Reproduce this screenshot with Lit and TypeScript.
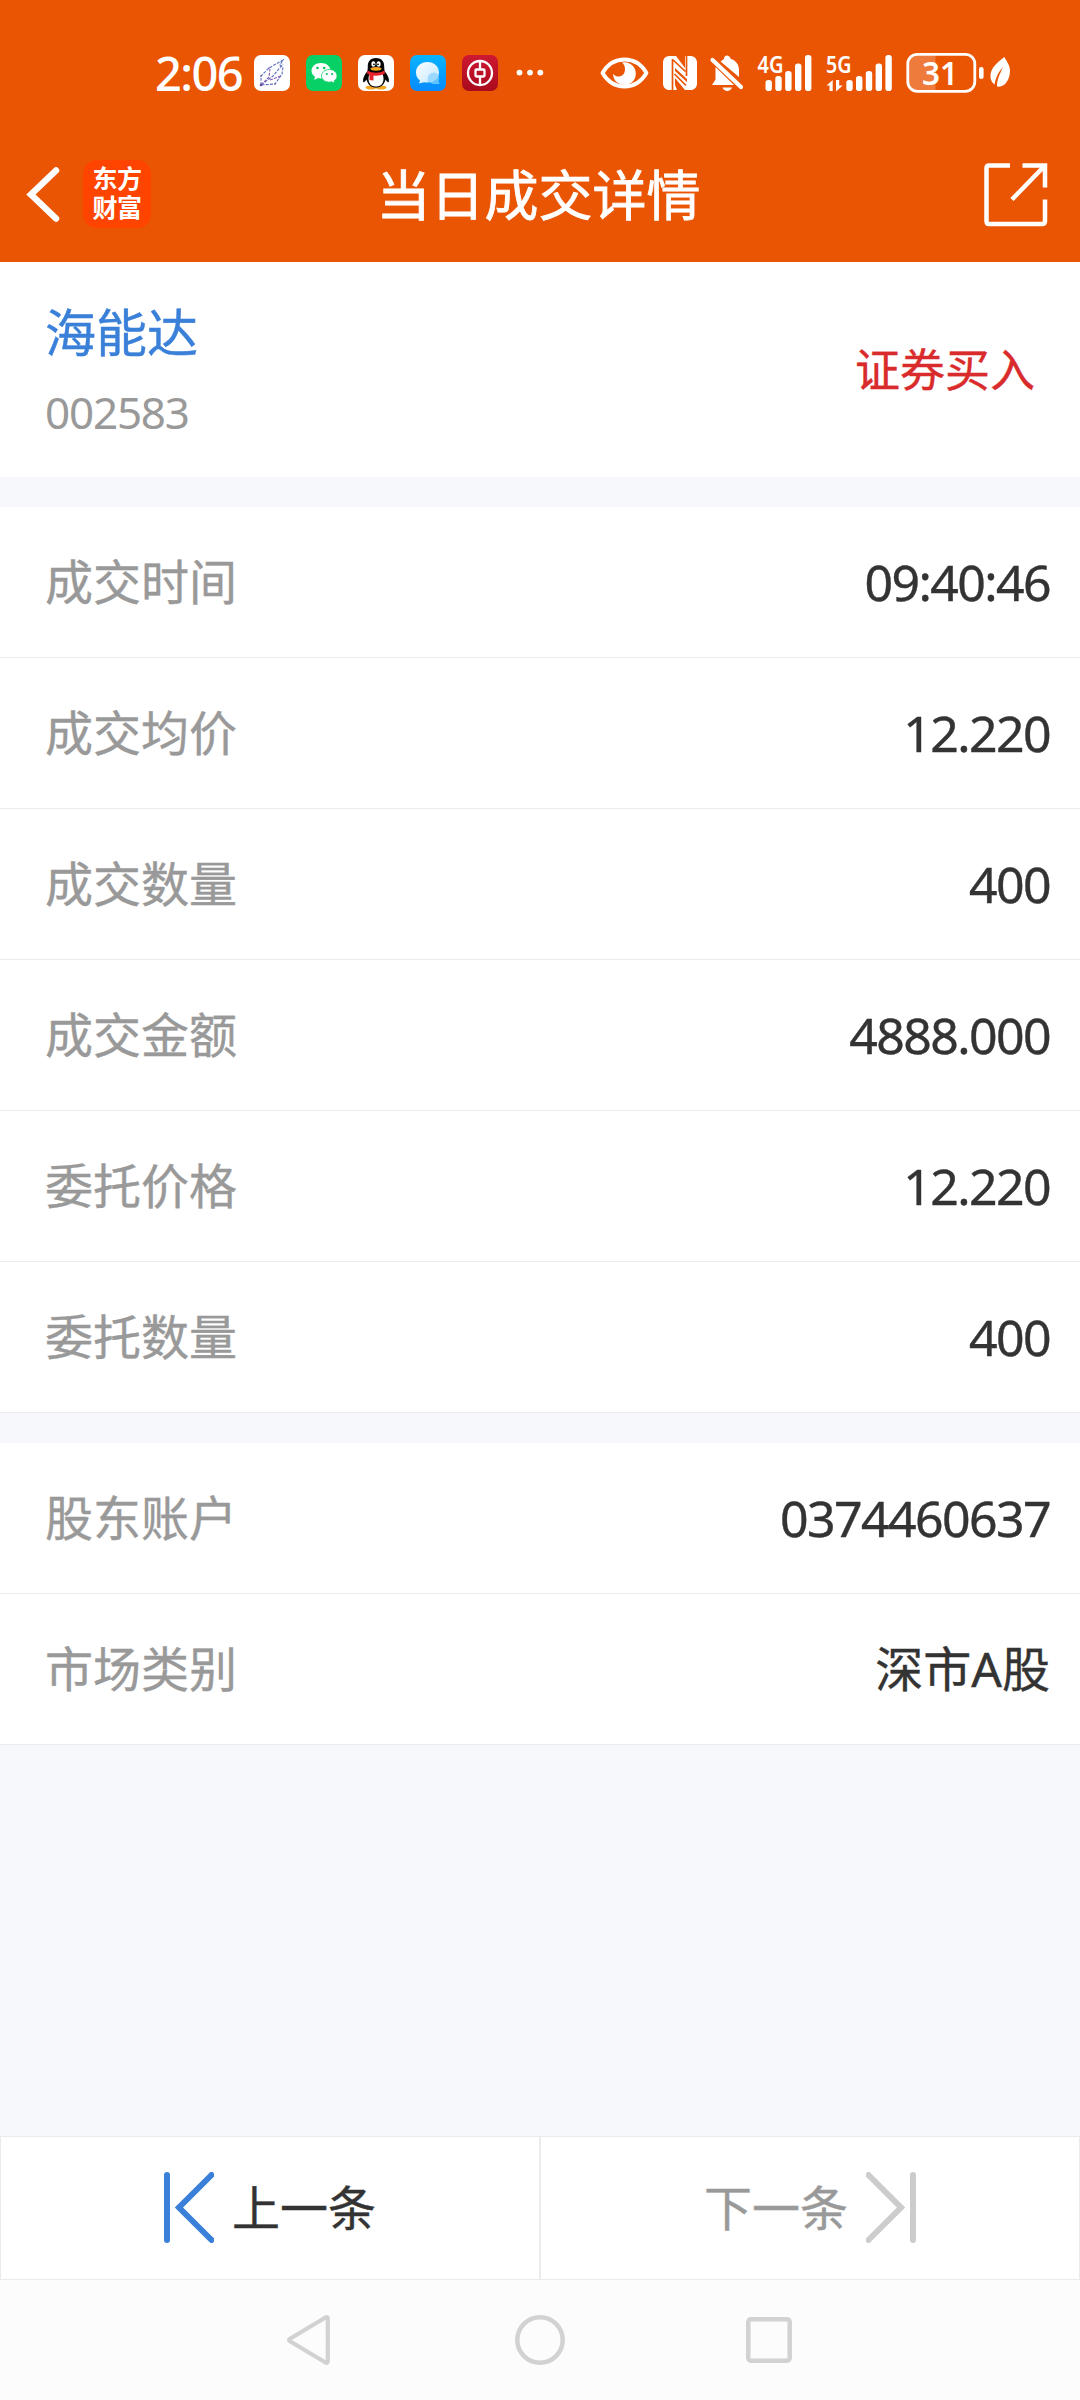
import { LitElement, html, css, svg } from "lit";
import { customElement, property } from "lit/decorators.js";

interface Entry {
  label: string;
  value: string;
}

const TRADE: Entry[] = [
  { label: "成交时间", value: "09:40:46" },
  { label: "成交均价", value: "12.220" },
  { label: "成交数量", value: "400" },
  { label: "成交金额", value: "4888.000" },
  { label: "委托价格", value: "12.220" },
  { label: "委托数量", value: "400" },
];

const ACCOUNT: Entry[] = [
  { label: "股东账户", value: "0374460637" },
  { label: "市场类别", value: "深市A股" },
];

// Signal bars: [x, top]; every bar ends on the same baseline.
const bars = (items: number[][]) =>
  items.map(([x, y]) => svg`<rect x=${x} y=${y} width="6.4" height=${37 - y} rx="2.8" fill="#fff"/>`);

@customElement("status-bar")
class StatusBar extends LitElement {
  static styles = css`
    :host {
      display: flex;
      align-items: center;
      height: 96px;
      padding: 50px 0 0 155px;
      box-sizing: border-box;
      color: #fff;
      font-family: "Noto Sans", "Noto Sans CJK SC", sans-serif;
    }
    svg {
      display: block;
      flex: none;
      overflow: visible;
    }
    .time {
      width: 99px;
      flex: none;
      font-size: 47px;
      line-height: 46px;
      font-weight: 500;
      letter-spacing: -1.6px;
      white-space: nowrap;
    }
    .apps {
      display: flex;
      gap: 16px;
      width: 346px;
      flex: none;
    }
    .net {
      font: 600 23px "Noto Sans", sans-serif;
    }
    .level {
      font: 600 33px "Noto Sans", sans-serif;
    }
    .system {
      display: flex;
      align-items: center;
    }
    .nfc { margin-left: 14px; }
    .bell { margin-left: 13px; }
    .signal { margin-left: 13px; }
    .signal5 { margin-left: 13px; }
    .battery { margin-left: 13px; }
    .leaf { margin-left: 6px; }
  `;

  render() {
    return html`
      <div class="time">2:06</div>
      <div class="apps">
        <svg width="36" height="36" viewBox="0 0 36 36">
          <rect width="36" height="36" rx="7" fill="#fff" />
          <g fill="none" stroke-width="1.1" stroke-dasharray="3 1.2">
            <path d="M7 30V21L15 13L29 5L26 10L29 12L28 19L21 29L7 30L19 21L29 9" stroke="#5b6fc0" />
            <path d="M7 30L15 22L16 14M16 25L27 21" stroke="#8a58b8" />
          </g>
          <g fill="#6b4aa5"><circle cx="7" cy="30" r="1.3" /><circle cx="7" cy="21" r=".8" /><circle cx="15" cy="13" r=".8" /><circle cx="21" cy="29" r=".8" /></g>
        </svg>
        <svg width="36" height="36" viewBox="0 0 36 36">
          <rect width="36" height="36" rx="7" fill="#07d166" />
          <path d="M15 8C9.500 8 5.500 11.500 5.500 15.700C5.500 18.200 6.900 20.300 9 21.700L8.200 25L12 23C18 24.600 24.500 21 24.500 15.700C24.500 11.500 20.400 8 15 8Z" fill="#fff" />
          <path d="M23.500 14.500C18.800 14.500 15.500 17.400 15.500 20.900C15.500 25.400 20.800 28.100 25.700 26.800L28.900 28.200L28.200 25.700C30.200 24.500 31 22.800 31 20.900C31 17.400 27.800 14.500 23.500 14.500Z" fill="#fff" stroke="#07d166" stroke-width=".8" />
          <g fill="#07c160"><circle cx="11.500" cy="13" r="1.300" /><circle cx="18.200" cy="13" r="1.300" /><circle cx="20.800" cy="19" r="1.100" /><circle cx="26.200" cy="19" r="1.100" /></g>
        </svg>
        <svg width="36" height="36" viewBox="0 0 36 36">
          <rect width="36" height="36" rx="7" fill="#fff" />
          <ellipse cx="13" cy="32.500" rx="5.500" ry="2" fill="#f5a623" />
          <ellipse cx="23" cy="32.500" rx="5.500" ry="2" fill="#f5a623" />
          <path d="M18 3C12 3 9.500 7 9.800 12L9.500 16C6 20 4.500 24 5.200 27C6 28 7.500 26 8.500 24.500C10 30 13 32.500 18 32.500S26 30 27.500 24.500C28.500 26 30 28 30.800 27C31.500 24 30 20 26.500 16L26.200 12C26.500 7 24 3 18 3Z" fill="#050505" />
          <path d="M11.500 19C9 25 11 31.500 18 31.500S27 25 24.500 19Z" fill="#fff" />
          <ellipse cx="15.400" cy="9" rx="2" ry="2.800" fill="#fff" /><ellipse cx="20.600" cy="9" rx="2" ry="2.800" fill="#fff" />
          <circle cx="16" cy="9.300" r=".9" /><circle cx="20" cy="9.300" r=".9" />
          <ellipse cx="18" cy="13.800" rx="5.500" ry="1.900" fill="#f7a51c" />
          <path d="M9.500 15.500C15 18.500 21 18.500 26.500 15.500L27 18.500C23 20.500 19 21 15.500 20.500V25.500L11.500 25V19.700L9 18.500Z" fill="#e8222b" />
        </svg>
        <svg width="36" height="36" viewBox="0 0 36 36">
          <defs>
            <linearGradient id="sky" x2="0" y2="1"><stop stop-color="#08b4ff" /><stop offset="1" stop-color="#078bff" /></linearGradient>
            <linearGradient id="bubble" x2="1" y2="1"><stop stop-color="#fff" /><stop offset="1" stop-color="#bfe6ff" /></linearGradient>
          </defs>
          <rect width="36" height="36" rx="7" fill="url(#sky)" />
          <path d="M23 17.500A6 6 0 0 1 28.500 26L29.500 29H23A6 6 0 0 1 23 17.500Z" fill="#62c4ff" />
          <path d="M17.500 7C11 7 6 11.500 6 17.500C6 21 7.600 23.700 10 25.500L9 28.500L14 27.200C22 28.600 29 24 29 17.500C29 11.500 24 7 17.500 7Z" fill="url(#bubble)" />
          <path d="M17.800 24A6 6 0 0 1 28.600 20C27.300 24.500 22.500 27.200 18 27.300Z" fill="#9bd8ff" />
        </svg>
        <svg width="36" height="36" viewBox="0 0 36 36">
          <defs><linearGradient id="bank" x2="0" y2="1"><stop stop-color="#ce1832" /><stop offset="1" stop-color="#a90b1d" /></linearGradient></defs>
          <rect width="36" height="36" rx="7" fill="url(#bank)" />
          <circle cx="18" cy="18" r="12" fill="none" stroke="#fff" stroke-width="2.300" />
          <rect x="13.500" y="14.500" width="9" height="7" rx="1" fill="none" stroke="#fff" stroke-width="2.300" />
          <path d="M18 6V14M18 22V30" stroke="#fff" stroke-width="2.300" />
        </svg>
        <svg width="30" height="36" viewBox="0 0 30 36" fill="#fff">
          <circle cx="5.500" cy="17.600" r="2.900" /><circle cx="16" cy="17.600" r="2.900" /><circle cx="26.300" cy="17.600" r="2.900" />
        </svg>
      </div>
      <div class="system">
        <svg width="49" height="38" viewBox="0 0 49 38">
          <path d="M2.500 19C13 1 36 1 46.500 19C36 37 13 37 2.500 19Z" fill="none" stroke="#fff" stroke-width="3.800" stroke-linejoin="round" />
          <path d="M22 8.500A11.400 11.400 0 1 1 13 20C16.500 23.500 21.500 23.500 24 19.500C26 15.500 25 11 22 8.500Z" fill="#fff" />
        </svg>
        <svg class="nfc" width="34" height="38" viewBox="0 0 34 38">
          <path d="M7 2H11V36H7C3 36 0.500 34 0 30V8C0.500 4 3 2 7 2Z" fill="#fff" />
          <path d="M23 2H27C31 2 33.500 4 34 8V30C33.500 34 31 36 27 36H24V2Z" fill="#fff" />
          <path d="M9 2H13L22 14V2H25V26L12 14V31L14 36H9Z" fill="#fff" />
          <path d="M12 17L25 29V36H22L12 24Z" fill="#fff" />
          <path d="M9.500 5V36M9.500 5.500L22.500 17.500M11.500 20L23 31.500M23.500 2V22" fill="none" stroke="#ea5504" stroke-width="1.700" />
        </svg>
        <svg class="bell" width="34" height="38" viewBox="0 0 34 38">
          <path d="M5.500 13L24 31H2L5.500 25.500ZM10.500 7.500L14 5C14 2.600 15.500 1.500 17 1.500S20.500 3 20.500 4.700C26 6.500 29 10.500 29 16V23Z" fill="#fff" />
          <path d="M2.500 6L31 33" stroke="#fff" stroke-width="4.200" stroke-linecap="round" />
          <path d="M12.500 33.500H22C20.500 38 14 38 12.500 33.500Z" fill="#fff" />
        </svg>
        <svg class="signal" width="56" height="38" viewBox="0 0 56 38">
          <text class="net" x="0.500" y="18.500" textLength="26" lengthAdjust="spacingAndGlyphs" fill="#fff">4G</text>
          ${bars([[8.5, 26], [18.3, 22], [28.2, 17], [38, 9.5], [48, 1]])}
        </svg>
        <svg class="signal5" width="67" height="38" viewBox="0 0 67 38">
          <text class="net" x="0" y="18.500" textLength="25.500" lengthAdjust="spacingAndGlyphs" fill="#fff">5G</text>
          <path d="M0.500 31.500L6.700 26V37H3.500V31.500ZM16.700 31.500L10 37.500V26H13.200V31.500Z" fill="#fff" />
          ${bars([[20.3, 26], [30, 22], [39.8, 17], [49.6, 9.5], [59.4, 1]])}
        </svg>
        <svg class="battery" width="78" height="42" viewBox="0 0 78 42">
          <path d="M12 2H29.500V40H12C5 40 2 36 2 31V11C2 5 6 2 12 2Z" fill="#fff" fill-opacity=".22" />
          <rect x="1.800" y="2.300" width="67" height="37" rx="9.500" fill="none" stroke="#fff" stroke-width="2.800" />
          <rect x="73" y="15" width="4.600" height="12" rx="2.200" fill="#fff" />
          <text class="level" x="16" y="32.500" textLength="36" lengthAdjust="spacingAndGlyphs" fill="#fff">31</text>
        </svg>
        <svg class="leaf" width="21" height="38" viewBox="0 0 21 38">
          <path d="M14.500 3C5 10 0 15.500 0.500 23C0.700 26 2 28.500 4.500 30.500C6 23 8.500 18 13 13C10 20 7 25 7 32.500C15 34 20 25 20 17C20 11 16.500 7.500 14.500 3Z" fill="#fff" />
        </svg>
      </div>
    `;
  }
}

@customElement("title-bar")
class TitleBar extends LitElement {
  static styles = css`
    :host {
      display: grid;
      grid-template-columns: 1fr auto 1fr;
      align-items: center;
      height: 136px;
      margin-top: 30px;
      padding: 0 32px 0 25px;
      box-sizing: border-box;
      color: #fff;
    }
    svg {
      display: block;
    }
    .left {
      display: flex;
      align-items: center;
      gap: 23px;
    }
    .logo {
      display: grid;
      align-content: center;
      width: 68px;
      height: 68px;
      border-radius: 14px;
      background: #ff4400;
      text-align: center;
      font-size: 25px;
      font-weight: 700;
      line-height: 29px;
      padding-bottom: 4px;
      box-sizing: border-box;
      letter-spacing: -0.4px;
    }
    .title {
      font-size: 54px;
      line-height: 80px;
      padding: 0 0 3px 4px;
      white-space: nowrap;
      -webkit-text-stroke: 0.8px currentColor;
    }
    .share {
      justify-self: end;
      margin-top: 1px;
    }
  `;

  render() {
    return html`
      <div class="left">
        <svg width="35" height="56" viewBox="0 0 35 56">
          <path d="M31 4.500L6 28.500L31 52.500" fill="none" stroke="#fff" stroke-width="6.500" stroke-linecap="round" stroke-linejoin="miter" />
        </svg>
        <div class="logo"><span>东方</span><span>财富</span></div>
      </div>
      <div class="title">当日成交详情</div>
      <svg class="share" width="64" height="64" viewBox="0 0 64 64" fill="none" stroke="#fff" stroke-width="4.500">
        <path d="M26 2.500H5Q2.500 2.500 2.500 5V58Q2.500 61 5 61H58Q61 61 61 58V36.500" />
        <path d="M38.500 2.500H61V24.500M61 2.500L28 36.500" />
      </svg>
    `;
  }
}

@customElement("detail-list")
class DetailList extends LitElement {
  @property({ attribute: false }) entries: Entry[] = [];

  static styles = css`
    :host {
      display: block;
      background: #fff;
    }
    .row {
      display: flex;
      align-items: center;
      justify-content: space-between;
      height: 151px;
      padding: 0 30px 0 45px;
      box-sizing: border-box;
      border-bottom: 1px solid #ebebed;
    }
    .label {
      color: #999;
      font-size: 48px;
      line-height: 72px;
      padding-bottom: 6px;
      -webkit-text-stroke: 0.4px currentColor;
    }
    .value {
      color: #333;
      font-family: "Noto Sans", "Noto Sans CJK SC", sans-serif;
      font-size: 50px;
      line-height: 72px;
      letter-spacing: -1.6px;
      padding-bottom: 1px;
      -webkit-text-stroke: 0.4px currentColor;
    }
    .cjk {
      font-size: 48px;
      letter-spacing: 0;
    }
  `;

  render() {
    return this.entries.map(
      (e) => html`
        <div class="row">
          <span class="label">${e.label}</span>
          <span class="value ${/[^\d.:]/.test(e.value) ? "cjk" : ""}">${e.value}</span>
        </div>
      `,
    );
  }
}

@customElement("app-root")
class AppRoot extends LitElement {
  static styles = css`
    :host {
      display: flex;
      flex-direction: column;
      width: 1080px;
      height: 2400px;
      background: #f7f8fb;
      font-family: "Noto Sans CJK SC", sans-serif;
    }
    svg {
      display: block;
    }
    .top {
      background: #ea5504;
    }
    .stock {
      display: flex;
      align-items: center;
      justify-content: space-between;
      height: 215px;
      padding: 0 45px;
      box-sizing: border-box;
      background: #fff;
    }
    .name {
      color: #3a80d9;
      font-size: 51px;
      line-height: 76px;
      -webkit-text-stroke: 0.4px currentColor;
    }
    .code {
      color: #999;
      font-family: "Noto Sans", sans-serif;
      font-size: 44px;
      line-height: 60px;
      letter-spacing: -1.2px;
      margin: 14px 0 6px;
    }
    .side {
      color: #d92b2b;
      font-size: 45px;
      line-height: 68px;
      padding-bottom: 4px;
      -webkit-text-stroke: 0.4px currentColor;
    }
    .section {
      margin-top: 30px;
    }
    .pager {
      display: grid;
      grid-template-columns: 1fr 1fr;
      margin-top: auto;
      height: 144px;
    }
    .page {
      display: flex;
      align-items: center;
      justify-content: center;
      gap: 18px;
      background: #fff;
      border: 1px solid #ebebed;
      color: #333;
      font-size: 48px;
      line-height: 72px;
    }
    .page svg {
      margin-bottom: 1px;
    }
    .page span {
      padding-bottom: 6px;
      -webkit-text-stroke: 0.4px currentColor;
    }
    .off {
      color: #999;
    }
    .nav {
      display: flex;
      align-items: center;
      gap: 180px;
      height: 120px;
      padding-left: 284px;
      box-sizing: border-box;
      background: #fcfcfc;
    }
  `;

  render() {
    return html`
      <div class="top">
        <status-bar></status-bar>
        <title-bar></title-bar>
      </div>
      <div class="stock">
        <div>
          <div class="name">海能达</div>
          <div class="code">002583</div>
        </div>
        <div class="side">证券买入</div>
      </div>
      <detail-list class="section" .entries=${TRADE}></detail-list>
      <detail-list class="section" .entries=${ACCOUNT}></detail-list>
      <div class="pager">
        <div class="page">
          <svg width="50" height="71" viewBox="0 0 50 71" fill="none" stroke="#3a80d9" stroke-width="6" stroke-linecap="round">
            <path d="M3 3V68M47.500 3L15 35.500L47.500 68" />
          </svg>
          <span>上一条</span>
        </div>
        <div class="page off">
          <span>下一条</span>
          <svg width="50" height="71" viewBox="0 0 50 71" fill="none" stroke="#ccc" stroke-width="6" stroke-linecap="round">
            <path d="M47 3V68M2.500 3L35 35.500L2.500 68" />
          </svg>
        </div>
      </div>
      <div class="nav">
        <svg width="50" height="52" viewBox="0 0 50 52" fill="none" stroke="#d2d2d2" stroke-width="4.200" stroke-linejoin="round">
          <path d="M41.500 3.500Q43.800 2.500 43.800 5V47Q43.800 49.500 41.500 48.500L6 27.300Q4 26 6 24.700Z" />
        </svg>
        <svg width="52" height="52" viewBox="0 0 52 52" fill="none" stroke="#d2d2d2" stroke-width="4.500">
          <circle cx="26" cy="26" r="22.700" />
        </svg>
        <svg width="46" height="46" viewBox="0 0 46 46" fill="none" stroke="#d2d2d2" stroke-width="4.500">
          <rect x="2.300" y="2.300" width="41.400" height="41.400" rx="2.500" />
        </svg>
      </div>
    `;
  }
}
